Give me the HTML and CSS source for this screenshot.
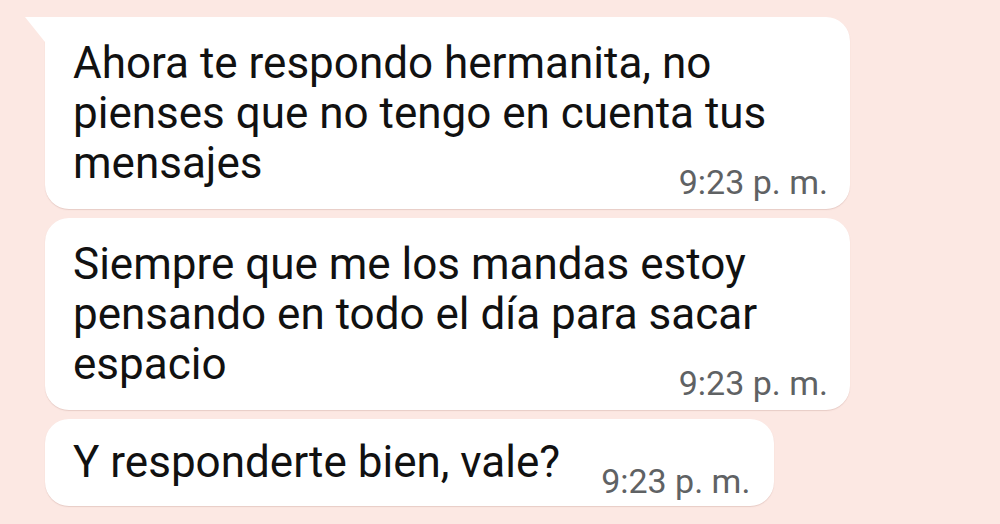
FILE: index.html
```html
<!DOCTYPE html>
<html lang="es">
<head>
<meta charset="utf-8">
<title>Chat</title>
<link rel="stylesheet" href="styles.css">
</head>
<body>
<main class="chat">
  <div class="bubble bubble--first bubble--wide">
    <p class="msg">Ahora te respondo hermanita, no pienses que no tengo en cuenta tus mensajes<span class="time">9:23 p.&nbsp;m.</span></p>
  </div>
  <div class="bubble bubble--wide">
    <p class="msg">Siempre que me los mandas estoy pensando en todo el día para sacar espacio<span class="time">9:23 p.&nbsp;m.</span></p>
  </div>
  <div class="bubble bubble--short">
    <p class="msg">Y responderte bien, vale?<span class="time">9:23 p.&nbsp;m.</span></p>
  </div>
</main>
</body>
</html>
```

FILE: styles.css
```css
html, body {
  margin: 0;
  padding: 0;
  background: #fce8e3;
  width: 1000px;
  height: 524px;
  overflow: hidden;
}

.chat {
  display: flex;
  flex-direction: column;
  align-items: flex-start;
  gap: 9px;
  padding: 17px 0 0 45px;
  font-family: Roboto, "Liberation Sans", sans-serif;
}

.bubble {
  position: relative;
  display: flow-root;
  background: #ffffff;
  border-radius: 24px;
  box-shadow: 0 1px 1px rgba(170, 120, 110, 0.25);
  max-width: 805px;
  box-sizing: border-box;
}

.bubble--first {
  border-top-left-radius: 0;
}

.bubble--first::before {
  content: "";
  position: absolute;
  left: -20px;
  top: 0;
  width: 20px;
  height: 25px;
  background: #ffffff;
  clip-path: polygon(0 0, 100% 0, 100% 100%);
}

.bubble--wide {
  width: 805px;
  padding: 21px 22px 9px 28px;
}

.bubble--short {
  padding: 18px 24px 7px 28px;
}

.msg {
  margin: 0;
  font-size: 44px;
  line-height: 50px;
  color: #111111;
  display: flow-root;
}

.time {
  float: right;
  margin: 26px 0 0 41px;
  font-size: 34px;
  line-height: 36px;
  color: #5f6264;
  white-space: nowrap;
}
```
